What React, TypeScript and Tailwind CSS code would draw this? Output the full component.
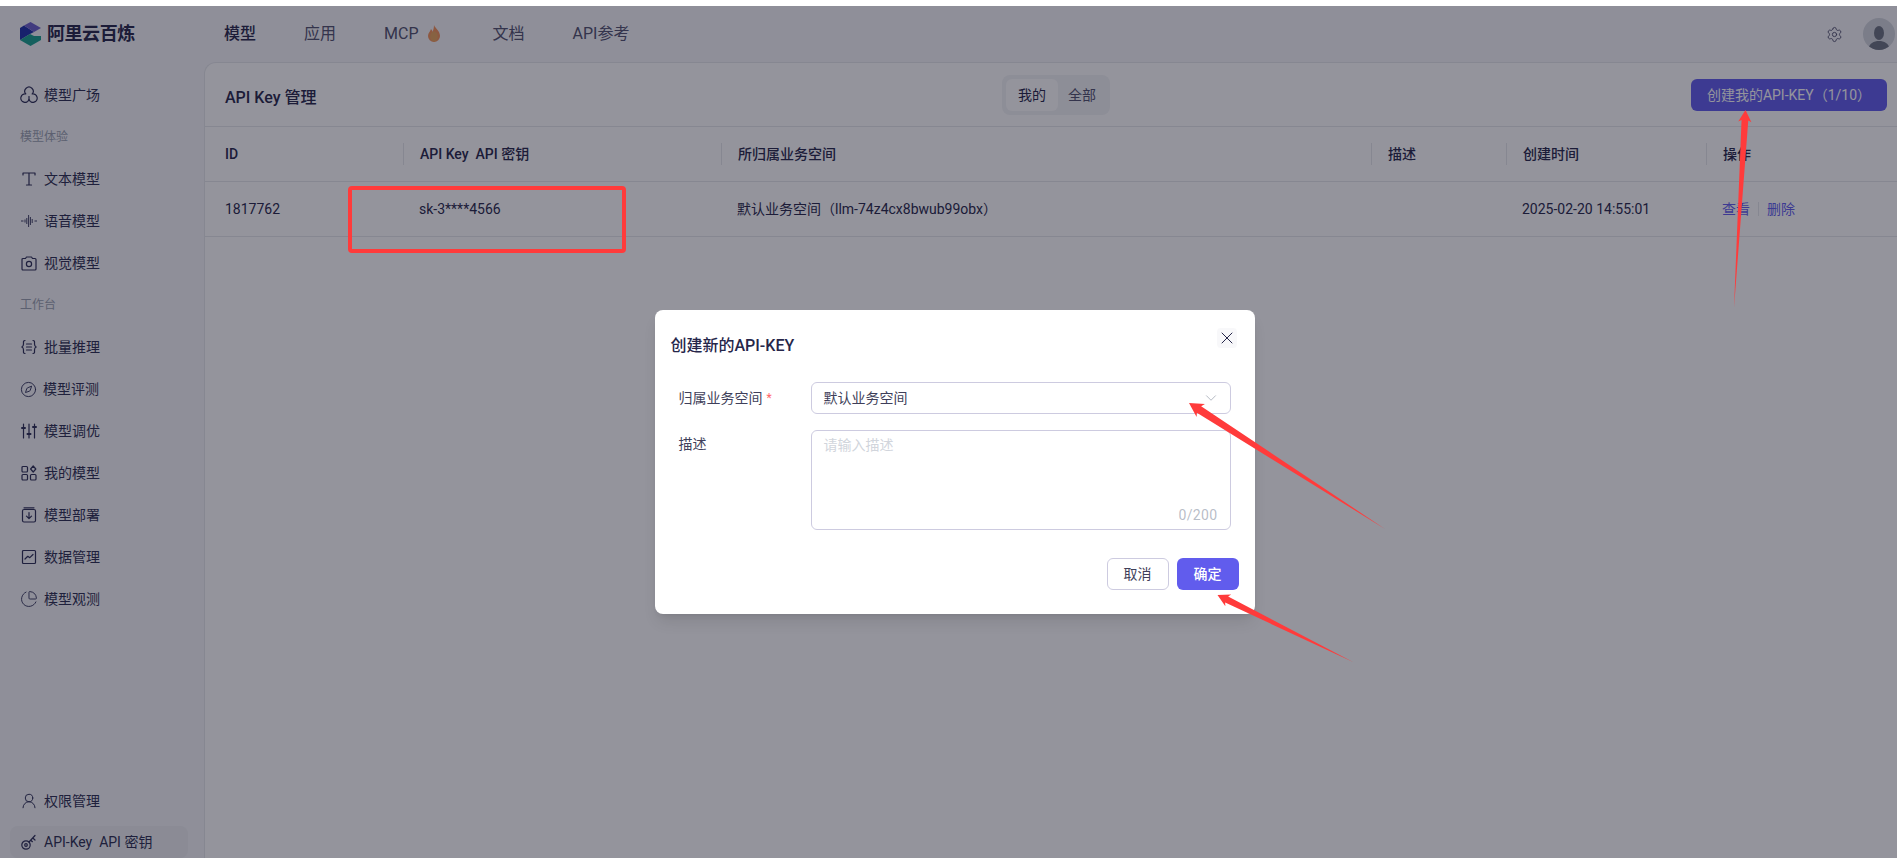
import React from 'react';
import { ChevronDown, ChartPie, Compass, Settings, UserRound, X } from 'lucide-react';

const tableCols = 'grid grid-cols-[198px_318px_650px_135px_200px_1fr]';

type IconProps = { children: React.ReactNode };

const NavIcon: React.FC<IconProps> = ({ children }) => (
    <svg width="18" height="18" viewBox="0 0 18 18" fill="none" stroke="#2b2d55" strokeWidth="1.2" strokeLinecap="round" strokeLinejoin="round" className="shrink-0">
        {children}
    </svg>
);

const icons: Record<string, React.ReactNode> = {
    plaza: (
        <NavIcon>
            <path d="M5.8 8A4.2 4.2 0 1 1 12.2 8 4.2 4.2 0 1 1 9 13.5 4.2 4.2 0 1 1 5.8 8z" />
            <path d="M9 10.500v3" />
        </NavIcon>
    ),
    text: (
        <NavIcon>
            <path d="M3 5V3h12v2M9 3v12M6.500 15h5" />
        </NavIcon>
    ),
    voice: (
        <NavIcon>
            <g strokeWidth="0.9" strokeLinecap="butt">
                <path d="M1 9h2.500M5 7.500v3M6.800 6v6M8.600 3v12M10.400 5v8M12.200 7v4M14.500 9h2.500" />
            </g>
        </NavIcon>
    ),
    camera: (
        <NavIcon>
            <path d="M2 5.500a1 1 0 0 1 1-1h2.500L6.500 3h5l1 1.500H15a1 1 0 0 1 1 1V15a1 1 0 0 1-1 1H3a1 1 0 0 1-1-1z" />
            <circle cx="9" cy="10" r="2.600" />
        </NavIcon>
    ),
    batch: (
        <NavIcon>
            <path d="M5 2.500C3 2.500 3.500 4 3.500 6S3.300 8.500 1.800 9c1.500.5 1.700 1 1.700 3s-.5 3.500 1.500 3.500M13 2.500c2 0 1.500 1.500 1.500 3.500s.2 2.500 1.700 3c-1.500.5-1.700 1-1.700 3s.5 3.500-1.500 3.500M6.500 6h5M6.500 9h5M6.500 12h5" />
        </NavIcon>
    ),
    eval: <Compass size={17} color="#2b2d55" strokeWidth={1.3} className="shrink-0" />,
    tune: (
        <NavIcon>
            <path d="M3.500 2v14M9 2v14M14.500 2v14" />
            <path d="M2 6h3M7.500 12h3M13 5h3" strokeWidth="2" />
        </NavIcon>
    ),
    mine: (
        <NavIcon>
            <rect x="2" y="2.500" width="5.500" height="5.500" rx="1" />
            <rect x="2" y="10.500" width="5.500" height="5.500" rx="1" />
            <rect x="10.500" y="10.500" width="5.500" height="5.500" rx="1" />
            <path d="M13.200 2l2.600 3-2.600 3-2.600-3z" />
        </NavIcon>
    ),
    deploy: (
        <NavIcon>
            <rect x="2.500" y="3.500" width="13" height="12.500" rx="1.500" />
            <path d="M4 1.800h10M9 6.500v6M6.500 10.200 9 12.700l2.500-2.500" />
        </NavIcon>
    ),
    data: (
        <NavIcon>
            <rect x="2.500" y="2.500" width="13" height="13" rx="1" />
            <path d="M5 11l2.800-2.700 2 1.400L13 6.500" />
        </NavIcon>
    ),
    watch: <ChartPie size={18} color="#2b2d55" strokeWidth={1.2} className="shrink-0" />,
    user: <UserRound size={18} color="#2b2d55" strokeWidth={1.3} className="shrink-0" />,
    key: (
        <NavIcon>
            <circle cx="6" cy="12" r="4.200" />
            <circle cx="6" cy="12" r="1.300" />
            <path d="M9 9l6-6.500M12.800 5l2.200 2M10.800 7.200l1.600 1.500" />
        </NavIcon>
    ),
};

const SideItem: React.FC<{ icon: string; label: string }> = ({ icon, label }) => (
    <div className="flex h-10.5 items-center gap-1.5 px-5 text-sm text-[#2b2d50]">
        {icons[icon]}
        <span>{label}</span>
    </div>
);

const GroupLabel: React.FC<{ label: string }> = ({ label }) => (
    <div className="flex h-10.5 items-center px-5 text-xs text-gray-400">{label}</div>
);

// tapered annotation arrow, thin at the tail and with a head at the tip
const arrowPoints = (tx: number, ty: number, px: number, py: number, head: number) => {
    const len = Math.hypot(px - tx, py - ty);
    const dx = (px - tx) / len;
    const dy = (py - ty) / len;
    const at = (back: number, side: number) =>
        `${px - dx * back - dy * side},${py - dy * back + dx * side}`;
    return [
        at(0, 0),
        at(head, head * 0.55),
        at(head * 0.85, head * 0.28),
        `${tx},${ty}`,
        at(head * 0.85, -head * 0.28),
        at(head, -head * 0.55),
    ].join(' ');
};

const HeadCell: React.FC<{ label: string; first?: boolean }> = ({ label, first }) =>
    first ? (
        <div className="pl-5">{label}</div>
    ) : (
        <div className="flex h-5.5 items-center border-l border-gray-200 pl-4">{label}</div>
    );

export default function App() {
    return (
        <div className="flex h-screen flex-col overflow-hidden bg-white font-['Roboto','Noto_Sans_CJK_SC',sans-serif] text-[#26264a]">
            <div className="h-1.5 shrink-0 bg-white" />

            <div className="relative flex min-h-0 flex-1 flex-col bg-[#f6f6f9]">
                {/* Top bar */}
                <header className="flex h-14 shrink-0 items-center">
                    <div className="flex w-51 items-center gap-1.5 pl-5">
                        <svg width="21" height="24" viewBox="0 0 21 24">
                            <path d="M0 6 4 3.500 14 10 10 12 0 18z" fill="#1c2fa8" />
                            <path d="M4 3.500 10.500 0 21 6 14 10z" fill="#6a5ecb" />
                            <path d="M0 18 10 12 14 14 21 14v4l-10.500 6z" fill="#18a08f" />
                        </svg>
                        <span className="text-lg font-semibold tracking-tight text-[#26264a]">阿里云百炼</span>
                    </div>
                    <nav className="flex items-center gap-12 pl-5 text-base text-[#50506e]">
                        <span className="font-medium text-[#26264a]">模型</span>
                        <span>应用</span>
                        <span className="flex items-center gap-2 pr-1">
                            MCP
                            <svg width="14" height="18" viewBox="0 0 14 18">
                                <path d="M7 0c1 3 6 6 6 11a6 6 0 0 1-12 0c0-3 2-4 3-7 1 1 1.500 2 1.500 3C6.500 5 7 2 7 0z" fill="#f3925a" />
                                <ellipse cx="7" cy="11.500" rx="3.800" ry="5" fill="#e8a45c" />
                            </svg>
                        </span>
                        <span>文档</span>
                        <span>API参考</span>
                    </nav>
                    <div className="ml-auto flex items-center gap-5 pr-0.5">
                        <Settings size={17} strokeWidth={1.3} color="#50506e" />
                        <div className="flex size-8 items-end justify-center overflow-hidden rounded-full bg-gray-300">
                            <svg width="24" height="26" viewBox="0 0 24 26" fill="#6b7280">
                                <ellipse cx="12" cy="9" rx="5" ry="7" />
                                <path d="M1 26c1-7 6-9 11-9s10 2 11 9z" />
                            </svg>
                        </div>
                    </div>
                </header>

                <div className="flex min-h-0 flex-1">
                    {/* Side menu */}
                    <aside className="flex w-51 shrink-0 flex-col pt-3">
                        <SideItem icon="plaza" label="模型广场" />
                        <GroupLabel label="模型体验" />
                        <SideItem icon="text" label="文本模型" />
                        <SideItem icon="voice" label="语音模型" />
                        <SideItem icon="camera" label="视觉模型" />
                        <GroupLabel label="工作台" />
                        <SideItem icon="batch" label="批量推理" />
                        <SideItem icon="eval" label="模型评测" />
                        <SideItem icon="tune" label="模型调优" />
                        <SideItem icon="mine" label="我的模型" />
                        <SideItem icon="deploy" label="模型部署" />
                        <SideItem icon="data" label="数据管理" />
                        <SideItem icon="watch" label="模型观测" />
                        <div className="mt-auto">
                            <SideItem icon="user" label="权限管理" />
                            <div className="mt-1 mr-4 ml-2.5 flex h-8 items-center gap-1.5 rounded-lg bg-gray-200/50 px-2.5 text-sm text-[#2b2d50]">
                                {icons.key}
                                <span>API-Key&nbsp;&nbsp;API 密钥</span>
                            </div>
                        </div>
                    </aside>

                    {/* Content */}
                    <main className="min-w-0 flex-1 rounded-tl-xl border-t border-l border-gray-200 bg-white">
                        <div className="grid h-16 grid-cols-3 items-center border-b border-gray-200 pr-2.5 pl-5">
                            <h1 className="pt-1.5 text-base font-medium">API Key 管理</h1>
                            <div className="flex justify-center">
                                <div className="flex h-10 items-center rounded-lg bg-gray-100 p-1 text-sm">
                                    <span className="flex h-8 items-center rounded-md bg-white px-3">我的</span>
                                    <span className="flex h-8 items-center px-2.5 text-[#50506e]">全部</span>
                                </div>
                            </div>
                            <div className="flex justify-end">
                                <button className="h-8 w-49 rounded-md bg-[#615ced] text-sm text-white">创建我的API-KEY（1/10）</button>
                            </div>
                        </div>

                        <div className={`${tableCols} h-13.75 items-center border-b border-gray-200 text-sm font-medium`}>
                            <HeadCell first label="ID" />
                            <HeadCell label={'API Key\u00a0\u00a0API 密钥'} />
                            <HeadCell label="所归属业务空间" />
                            <HeadCell label="描述" />
                            <HeadCell label="创建时间" />
                            <HeadCell label="操作" />
                        </div>
                        <div className={`${tableCols} h-13.75 items-center border-b border-gray-200 text-sm`}>
                            <div className="pl-5">1817762</div>
                            <div className="pl-4">sk-3****4566</div>
                            <div className="pl-4">默认业务空间（llm-74z4cx8bwub99obx）</div>
                            <div />
                            <div className="pl-4">2025-02-20 14:55:01</div>
                            <div className="flex items-center gap-2 pl-4 text-[#615ced]">
                                <span>查看</span>
                                <span className="h-3.5 border-l border-gray-200" />
                                <span>删除</span>
                            </div>
                        </div>
                    </main>
                </div>

                {/* Modal */}
                <div className="absolute inset-0 flex items-start justify-center bg-[#121224]/45 pt-76 pl-3">
                    <div className="w-150 rounded-lg bg-white px-4 pt-6 pb-6 shadow-lg">
                        <div className="relative flex h-6 items-center">
                            <h2 className="text-base font-medium">创建新的API-KEY</h2>
                            <button className="absolute -top-1.5 right-0.5 flex size-5 items-center justify-center rounded bg-gray-100/60">
                                <X size={20} strokeWidth={1.2} color="#26264a" />
                            </button>
                        </div>
                        <div className="mt-6 flex flex-col gap-4 text-sm">
                            <div className="flex items-center">
                                <label className="flex w-35 items-center gap-1 pl-2 text-[#3f3f5a]">
                                    归属业务空间<span className="text-xs text-red-400">*</span>
                                </label>
                                <div className="flex h-8 w-105 items-center justify-between rounded-md border border-[#cdcbe0] pr-2.5 pl-3 text-[#3f3f5a]">
                                    <span>默认业务空间</span>
                                    <ChevronDown size={18} strokeWidth={1} color="#9ca3af" />
                                </div>
                            </div>
                            <div className="flex items-start">
                                <label className="w-35 pt-1 pl-2 text-[#3f3f5a]">描述</label>
                                <div className="flex h-25 w-105 flex-col justify-between rounded-md border border-[#cdcbe0] px-3 py-1 text-gray-300">
                                    <span>请输入描述</span>
                                    <span className="self-end tracking-wide text-gray-400/70">0/200</span>
                                </div>
                            </div>
                        </div>
                        <div className="mt-7 flex justify-end gap-2 text-sm">
                            <button className="h-8 w-15.5 rounded-md border border-[#cdcbe0] bg-white text-[#3f3f5a]">取消</button>
                            <button className="h-8 w-15.5 rounded-md bg-[#615ced] font-medium text-white">确定</button>
                        </div>
                    </div>
                </div>
            </div>

            {/* Red annotations drawn on top of the screenshot */}
            <div className="absolute top-[186px] left-[348px] h-[67px] w-[278px] rounded-sm border-4 border-[#ff3b3b]" />
            <svg className="pointer-events-none absolute inset-0 h-full w-full">
                <polygon points={arrowPoints(1734, 308, 1745.5, 110, 12)} fill="#ff3b3b" />
                <polygon points={arrowPoints(1385, 529, 1189, 403, 14)} fill="#ff3b3b" />
                <polygon points={arrowPoints(1353, 662, 1217.5, 595, 12)} fill="#ff3b3b" />
            </svg>
        </div>
    );
}
